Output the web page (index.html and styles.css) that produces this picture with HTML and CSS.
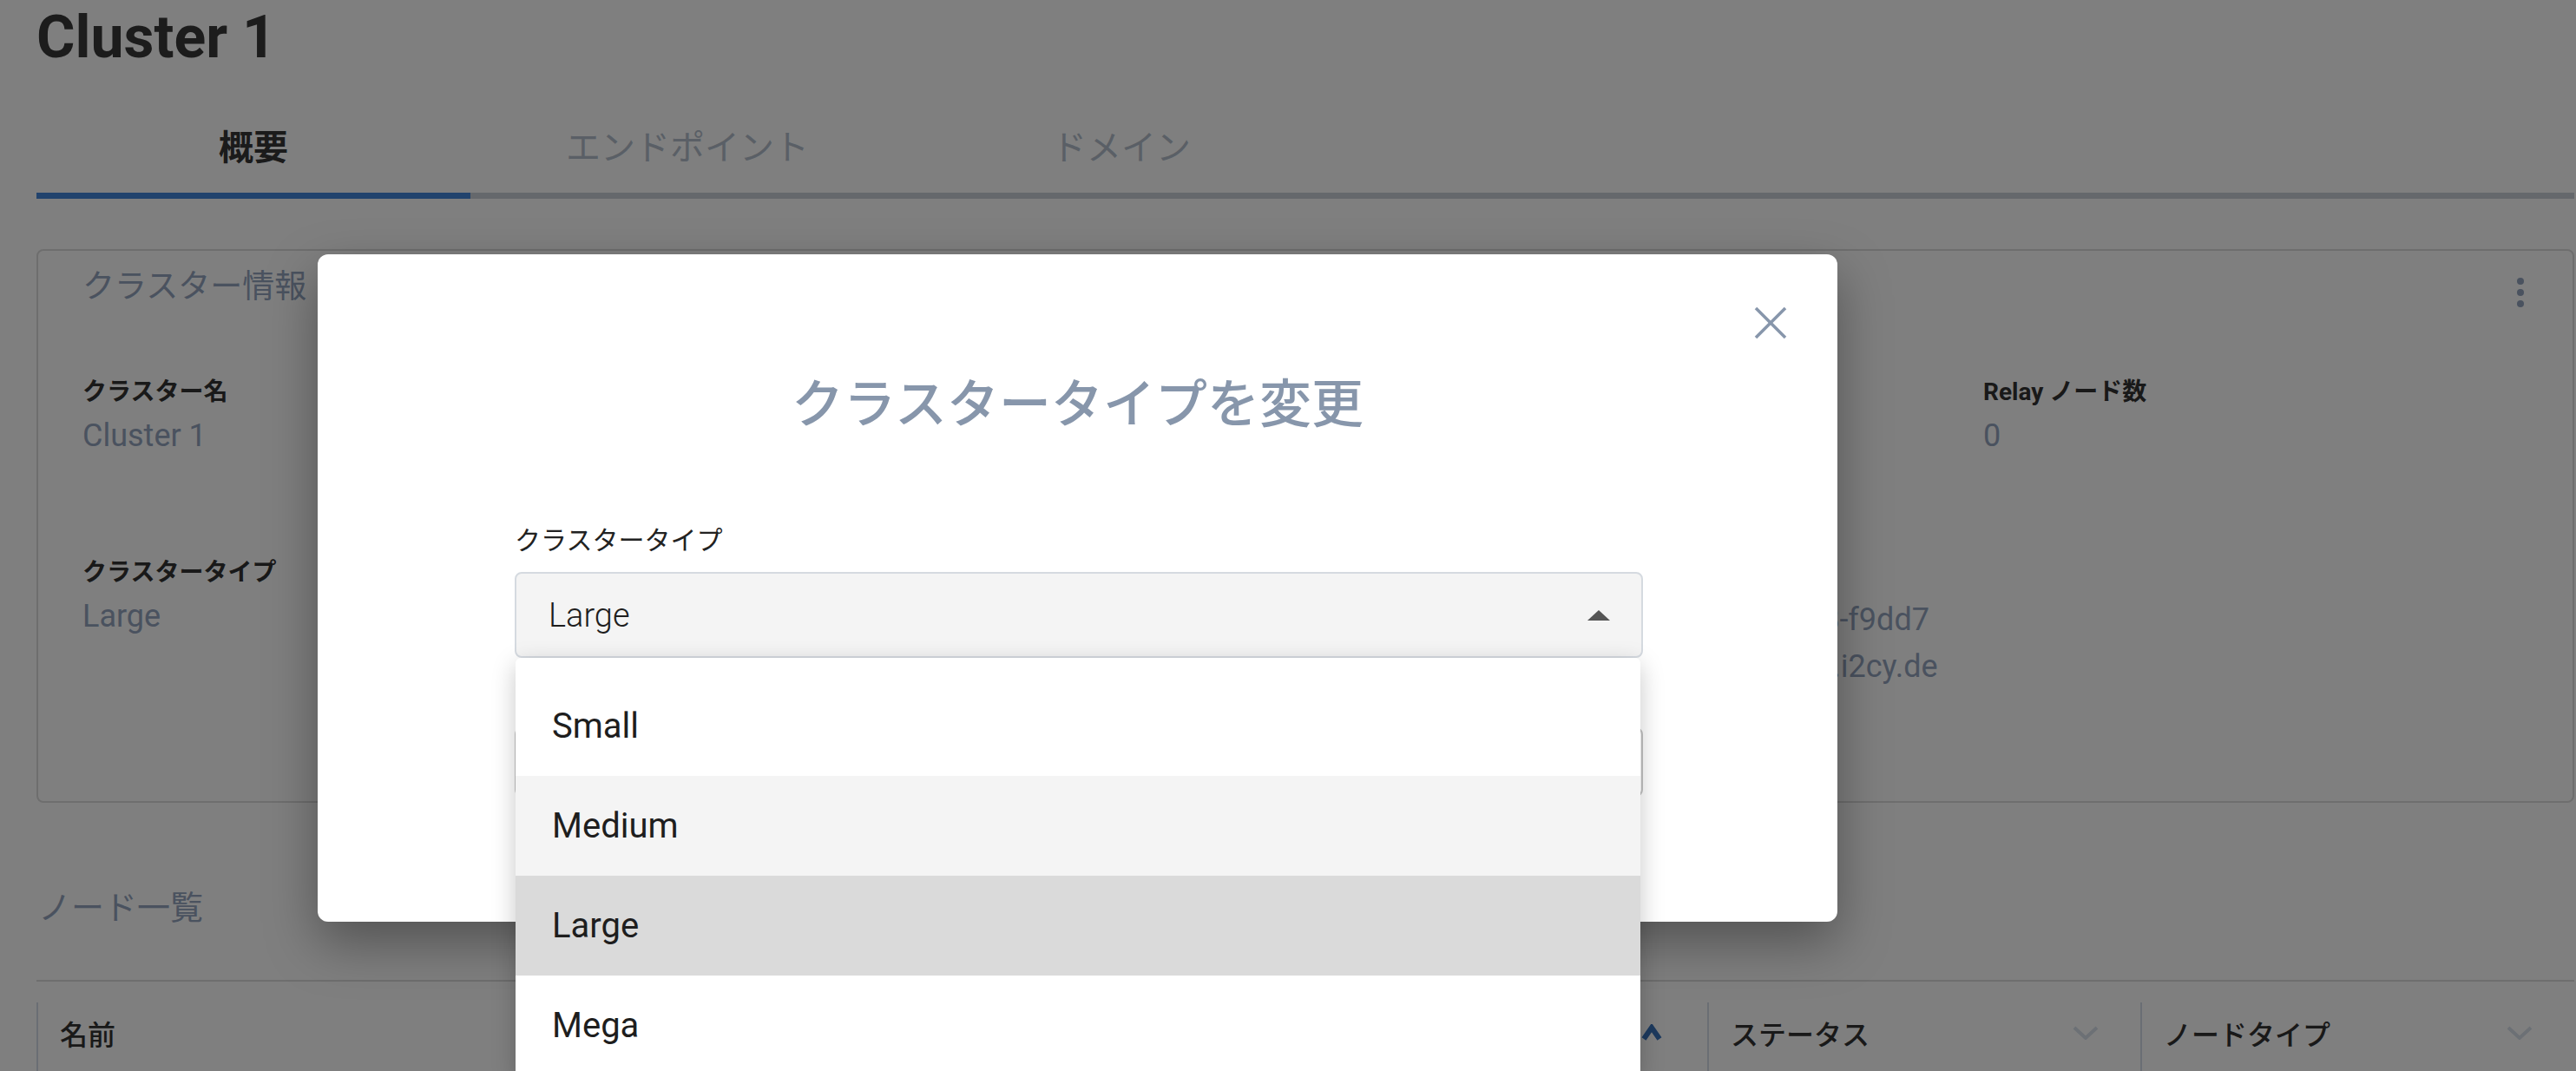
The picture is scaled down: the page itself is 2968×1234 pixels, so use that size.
FILE: index.html
```html
<!DOCTYPE html>
<html lang="ja">
<head>
    <meta charset="UTF-8">
    <title>Cluster 1</title>
    <link rel="stylesheet" href="styles.css">
</head>
<body>
    <div class="page">
        <h1 class="page-title">Cluster 1</h1>

        <nav class="tabs">
            <div class="tab active">概要</div>
            <div class="tab">エンドポイント</div>
            <div class="tab">ドメイン</div>
            <div class="tab-rest"></div>
        </nav>

        <section class="card">
            <div class="card-head">
                <h2 class="card-title">クラスター情報</h2>
                <svg class="more" width="12" height="36" viewBox="0 0 12 36">
                    <circle cx="6" cy="5" r="4"/>
                    <circle cx="6" cy="18" r="4"/>
                    <circle cx="6" cy="31" r="4"/>
                </svg>
            </div>
            <div class="fields">
                <div class="field">
                    <div class="field-label">クラスター名</div>
                    <div class="field-value">Cluster 1</div>
                </div>
                <div class="field"></div>
                <div class="field"></div>
                <div class="field">
                    <div class="field-label">Relay ノード数</div>
                    <div class="field-value">0</div>
                </div>
                <div class="field">
                    <div class="field-label">クラスタータイプ</div>
                    <div class="field-value">Large</div>
                </div>
                <div class="field"></div>
                <div class="field field-shift">
                    <div class="field-value">c8a2f4e1-6b3d-4f7a-9e25-1b7c3d8-f9dd7</div>
                    <div class="field-value">cluster-1-c8a2f4e1.ap-northeast-1f.i2cy.de</div>
                </div>
            </div>
        </section>

        <h2 class="section-title">ノード一覧</h2>

        <div class="table">
            <div class="thead">
                <div class="th">
                    <span>名前</span>
                    <svg class="sort up" width="24" height="20" viewBox="0 0 24 20"><polyline points="3,17 12,4 21,17"/></svg>
                </div>
                <div class="th">
                    <span>ステータス</span>
                    <svg class="sort" width="30" height="16" viewBox="0 0 30 16"><polyline points="2,2 15,14 28,2"/></svg>
                </div>
                <div class="th">
                    <span>ノードタイプ</span>
                    <svg class="sort" width="30" height="16" viewBox="0 0 30 16"><polyline points="2,2 15,14 28,2"/></svg>
                </div>
            </div>
        </div>
    </div>

    <div class="overlay">
        <div class="modal">
            <div class="modal-top">
                <svg class="close" width="38" height="38" viewBox="0 0 38 38">
                    <line x1="2" y1="2" x2="36" y2="36"/>
                    <line x1="36" y1="2" x2="2" y2="36"/>
                </svg>
            </div>
            <h2 class="modal-title">クラスタータイプを変更</h2>
            <div class="form">
                <label class="form-label">クラスタータイプ</label>
                <div class="select">
                    <div class="select-box">
                        <span>Large</span>
                        <span class="caret"></span>
                    </div>
                    <ul class="options">
                        <li>Small</li>
                        <li class="hover">Medium</li>
                        <li class="selected">Large</li>
                        <li>Mega</li>
                    </ul>
                </div>
                <div class="submit-row"></div>
            </div>
        </div>
    </div>
</body>
</html>
```

FILE: styles.css
```css
* {
    margin: 0;
    padding: 0;
    box-sizing: border-box;
}

body {
    font-family: Roboto, "Noto Sans CJK JP", sans-serif;
    background: #fff;
    color: #333;
    width: 2968px;
    height: 1234px;
    overflow: hidden;
    position: relative;
}

.page {
    padding-left: 42px;
    padding-right: 2px;
}

.page-title {
    font-size: 68px;
    font-weight: 700;
    line-height: 80px;
    padding-top: 3px;
    color: #383838;
    height: 112px;
}

/* tabs */
.tabs {
    display: flex;
    border-bottom: 7px solid #cad0d8;
}

.tab {
    width: 500px;
    height: 117px;
    display: flex;
    align-items: center;
    justify-content: center;
    font-size: 40px;
    color: #b4becc;
    margin-bottom: -7px;
    border-bottom: 7px solid transparent;
}

.tab.active {
    color: #373737;
    font-weight: 700;
    border-bottom-color: #4486da;
}

.tab-rest {
    flex: 1;
}

/* card */
.card {
    margin-top: 58px;
    border: 2px solid #dcdcdc;
    border-radius: 8px;
    padding: 18px 0 0 51px;
    height: 638px;
}

.card-head {
    display: flex;
    justify-content: space-between;
    align-items: flex-start;
    padding-right: 54px;
}

.card-title {
    font-size: 37px;
    font-weight: 400;
    line-height: 48px;
    color: #94a5bf;
}

.more {
    fill: #94a5bf;
    margin-top: 12px;
}

.fields {
    display: grid;
    grid-template-columns: 730px 730px 730px 1fr;
    row-gap: 113px;
    margin-top: 79px;
}

.field-shift {
    padding-top: 45px;
}

.field-label {
    font-size: 28px;
    font-weight: 700;
    line-height: 36px;
    color: #333;
    margin-bottom: 5px;
}

.field-value {
    font-size: 36px;
    line-height: 54px;
    color: #94a5bf;
    white-space: nowrap;
}

.section-title {
    font-size: 38px;
    font-weight: 400;
    line-height: 50px;
    color: #94a5bf;
    margin-top: 96px;
    padding-left: 2px;
}

/* table */
.table {
    margin-top: 58px;
    border-top: 2px solid #dddddd;
}

.thead {
    display: grid;
    grid-template-columns: 1925px 499px 1fr;
    padding-top: 24px;
}

.th {
    border-left: 2px solid #d4dce8;
    height: 80px;
    display: flex;
    align-items: center;
    justify-content: space-between;
    padding: 0 48px 10px 25px;
    font-size: 32px;
    font-weight: 500;
    color: #333;
}

.th:first-child {
    padding-right: 52px;
}

.sort {
    fill: none;
    stroke: #d8e0ea;
    stroke-width: 4;
}

.sort.up {
    stroke: #3a74bc;
    stroke-width: 6;
}

/* modal */
.overlay {
    position: absolute;
    inset: 0;
    background: rgba(0, 0, 0, 0.5);
}

.modal {
    position: absolute;
    left: 366px;
    top: 293px;
    width: 1751px;
    height: 769px;
    background: #fff;
    border-radius: 12px;
    box-shadow: 0 24px 60px rgba(0, 0, 0, 0.35);
    padding-top: 60px;
}

.modal-top {
    display: flex;
    justify-content: flex-end;
    padding-right: 58px;
    height: 38px;
}

.close {
    stroke: #8796ab;
    stroke-width: 3.5;
}

.modal-title {
    margin-top: 40px;
    text-align: center;
    font-size: 60px;
    font-weight: 500;
    line-height: 72px;
    color: #8796ab;
}

.form {
    padding: 0 224px 0 227px;
    margin-top: 100px;
}

.form-label {
    display: block;
    font-size: 30px;
    line-height: 40px;
    color: #222;
    margin-bottom: 16px;
}

.select {
    position: relative;
}

.select-box {
    height: 99px;
    border: 2px solid #d5dae0;
    border-radius: 8px;
    background: #f4f4f4;
    display: flex;
    align-items: center;
    justify-content: space-between;
    padding: 0 36px 0 37px;
    font-size: 38px;
    font-weight: 300;
    color: #1e1e1e;
}

.caret {
    width: 0;
    height: 0;
    border-left: 13px solid transparent;
    border-right: 13px solid transparent;
    border-bottom: 12px solid #555;
}

.options {
    position: absolute;
    left: 1px;
    right: 3px;
    top: 99px;
    list-style: none;
    background: #fff;
    padding-top: 21px;
    border-radius: 6px 6px 0 0;
    box-shadow: 0 8px 28px rgba(0, 0, 0, 0.22);
    z-index: 2;
}

.options li {
    height: 115px;
    display: flex;
    align-items: center;
    padding-left: 42px;
    font-size: 40px;
    color: #1e1e1e;
}

.options li.hover {
    background: #f4f4f4;
}

.options li.selected {
    background: #dadada;
}

.submit-row {
    margin-top: 80px;
    height: 80px;
    border: 2px solid #c4c4c4;
    border-radius: 8px;
}
```
